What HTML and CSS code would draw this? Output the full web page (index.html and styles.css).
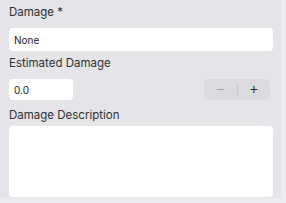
FILE: index.html
```html
<!DOCTYPE html>
<html lang="en">

<head>
    <meta charset="UTF-8">
    <meta name="viewport" content="width=device-width, initial-scale=1.0">
    <title>Damage</title>
    <link rel="stylesheet" href="styles.css">
</head>

<body>
    <div class="page">
        <div class="form">
            <label class="field-label">Damage *</label>
            <div class="text-input wide">None</div>

            <label class="field-label">Estimated Damage</label>
            <div class="number-row">
                <div class="text-input small">0.0</div>
                <div class="stepper">
                    <button class="step-btn minus">&minus;</button>
                    <span class="step-divider"></span>
                    <button class="step-btn plus">+</button>
                </div>
            </div>

            <label class="field-label desc">Damage Description</label>
            <div class="text-area"></div>
        </div>
        <div class="side-strip"></div>
    </div>
</body>

</html>
```

FILE: styles.css
```css
body {
    margin: 0;
    padding: 0;
    font-family: 'Inter', 'Liberation Sans', sans-serif;
    background-color: #ececf0;
    color: #1c1c1e;
}

.page {
    display: flex;
    height: 203px;
}

.form {
    width: 281px;
    height: 198px;
    background-color: #e4e4e9;
    padding: 5px 8px 0 9px;
    box-sizing: border-box;
    display: flex;
    flex-direction: column;
}

.side-strip {
    flex: 1;
}

.field-label {
    font-size: 11.5px;
    line-height: 14px;
    height: 14px;
    margin-bottom: 9px;
    color: #303033;
}

.text-input {
    background: #fff;
    border-radius: 4px;
    font-size: 10px;
    display: flex;
    align-items: center;
    padding-left: 5px;
    box-sizing: border-box;
    color: #1c1c1e;
}

.wide {
    height: 23px;
    margin-bottom: 5px;
}

.number-row {
    display: flex;
    justify-content: space-between;
    align-items: center;
    margin-right: 3px;
    margin-bottom: 8px;
}

.small {
    width: 64px;
    height: 21px;
}

.stepper {
    width: 66px;
    height: 21px;
    background: #dadadf;
    border-radius: 5px;
    display: flex;
    align-items: center;
}

.step-btn {
    flex: 1;
    border: none;
    background: none;
    padding: 0;
    font-family: 'Liberation Sans', sans-serif;
    font-size: 14px;
    line-height: 21px;
    height: 21px;
    cursor: pointer;
}

.minus {
    color: #a1a1a6;
}

.plus {
    color: #2c2c2e;
}

.step-divider {
    width: 1px;
    height: 11px;
    background: #c4c4c9;
}

.desc {
    margin-bottom: 4px;
}

.text-area {
    flex: 1;
    background: #fff;
    border-radius: 4px;
    margin-bottom: 1px;
}
```
